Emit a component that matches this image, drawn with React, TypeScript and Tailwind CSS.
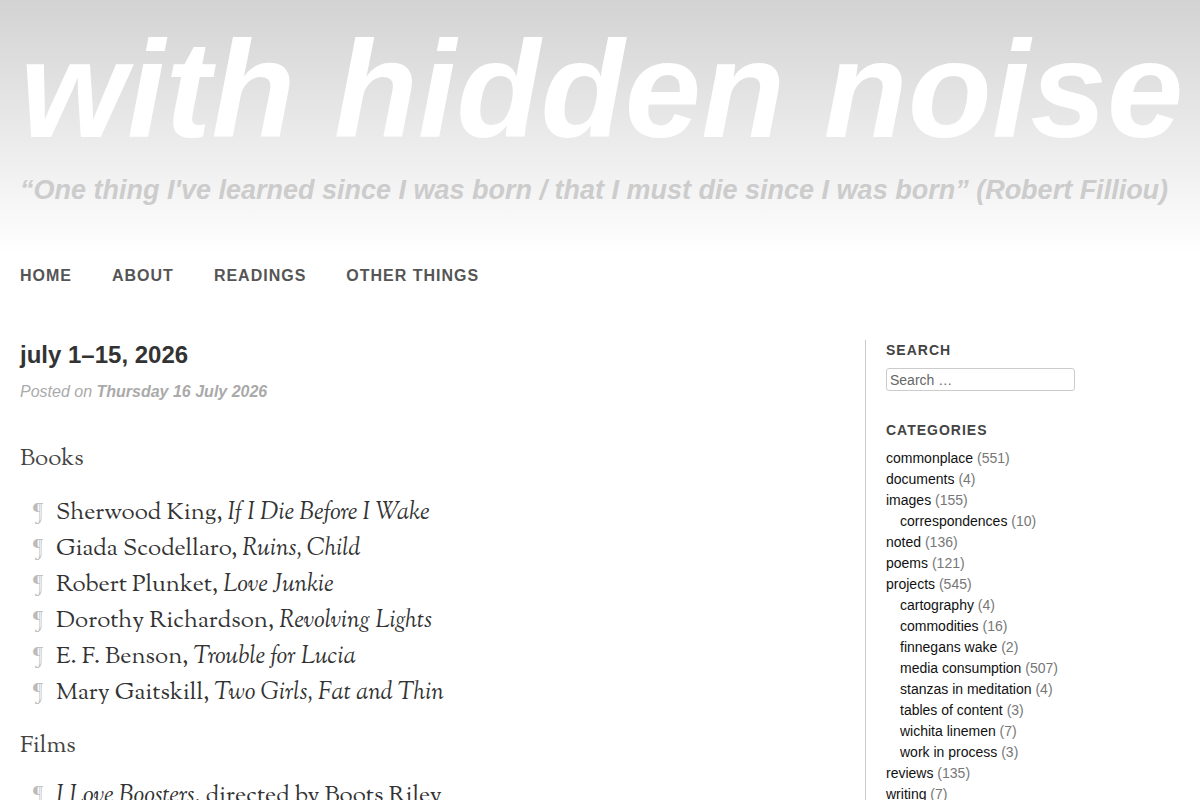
const books: [string, string][] = [
    ['Sherwood King', 'If I Die Before I Wake'],
    ['Giada Scodellaro', 'Ruins, Child'],
    ['Robert Plunket', 'Love Junkie'],
    ['Dorothy Richardson', 'Revolving Lights'],
    ['E. F. Benson', 'Trouble for Lucia'],
    ['Mary Gaitskill', 'Two Girls, Fat and Thin'],
];

type Category = { name: string; count: number; children?: { name: string; count: number }[] };

const categories: Category[] = [
    { name: 'commonplace', count: 551 },
    { name: 'documents', count: 4 },
    { name: 'images', count: 155, children: [{ name: 'correspondences', count: 10 }] },
    { name: 'noted', count: 136 },
    { name: 'poems', count: 121 },
    {
        name: 'projects',
        count: 545,
        children: [
            { name: 'cartography', count: 4 },
            { name: 'commodities', count: 16 },
            { name: 'finnegans wake', count: 2 },
            { name: 'media consumption', count: 507 },
            { name: 'stanzas in meditation', count: 4 },
            { name: 'tables of content', count: 3 },
            { name: 'wichita linemen', count: 7 },
            { name: 'work in process', count: 3 },
        ],
    },
    { name: 'reviews', count: 135 },
    { name: 'writing', count: 7 },
];

const serif = "font-['Sorts_Mill_Goudy','Liberation_Serif',serif]";

function Pilcrow() {
    return <span className="mr-3 inline-block w-[24px] text-right text-[#bbb]">¶</span>;
}

function CategoryLink({ name, count }: { name: string; count: number }) {
    return (
        <div className="leading-[21px]">
            <span className="text-[#111]">{name}</span> <span className="text-[#777]">({count})</span>
        </div>
    );
}

export default function App() {
    return (
        <div className="min-h-screen overflow-hidden bg-white font-['Liberation_Sans',Arial,sans-serif] text-[#333]">
            <header className="h-[254px] overflow-hidden bg-gradient-to-b from-[#d3d3d3] to-[#ffffff] px-5">
                <h1 className="whitespace-nowrap pt-[15px] text-[137px] font-bold italic leading-[150px] tracking-[0.4px] text-white">
                    with hidden noise
                </h1>
                <p className="mt-[7px] whitespace-nowrap text-[27px] font-bold italic leading-[36px] text-[#cccccc]">
                    “One thing I've learned since I was born / that I must die since I was born” (Robert Filliou)
                </p>
            </header>

            <nav className="flex gap-10 px-5 pt-[10px] text-[16px] font-bold uppercase tracking-[1px] text-[#555]">
                <span>Home</span>
                <span>About</span>
                <span>Readings</span>
                <span>Other things</span>
            </nav>

            <div className="mt-[52px] flex px-5">
                <main className="w-[845px] pr-5">
                    <h2 className="text-[24px] font-bold leading-[30px] text-[#333]">july 1–15, 2026</h2>
                    <p className="mt-[10px] text-[16px] italic text-[#aaa]">
                        Posted on <span className="font-bold">Thursday 16 July 2026</span>
                    </p>

                    <div className={`${serif} mt-[40px] text-[24px] text-[#333]`}>
                        <h3 className="leading-[30px] text-[#444]">Books</h3>
                        <ul className="mt-[21px]">
                            {books.map(([author, title]) => (
                                <li key={author} className="leading-[36px]">
                                    <Pilcrow />
                                    {author}, <i>{title}</i>
                                </li>
                            ))}
                        </ul>
                        <h3 className="mt-[20px] leading-[30px] text-[#444]">Films</h3>
                        <ul className="mt-[17px]">
                            <li className="leading-[36px]">
                                <Pilcrow />
                                <i>I Love Boosters</i>, directed by Boots Riley
                            </li>
                        </ul>
                    </div>
                </main>

                <aside className="min-h-[500px] border-l border-[#ccc] pl-5 text-[14px]">
                    <h4 className="text-[14px] font-bold uppercase tracking-[1px] text-[#444]">Search</h4>
                    <input
                        type="text"
                        placeholder="Search …"
                        className="mt-[7px] h-[23px] w-[189px] rounded-[3px] border border-[#ccc] px-[3px] text-[14px] text-[#333] placeholder:text-[#666]"
                    />
                    <h4 className="mt-[29px] text-[14px] font-bold uppercase tracking-[1px] text-[#444]">Categories</h4>
                    <div className="mt-[7px]">
                        {categories.map((c) => (
                            <div key={c.name}>
                                <CategoryLink name={c.name} count={c.count} />
                                {c.children && (
                                    <div className="pl-[14px]">
                                        {c.children.map((ch) => (
                                            <CategoryLink key={ch.name} name={ch.name} count={ch.count} />
                                        ))}
                                    </div>
                                )}
                            </div>
                        ))}
                    </div>
                </aside>
            </div>
        </div>
    );
}
